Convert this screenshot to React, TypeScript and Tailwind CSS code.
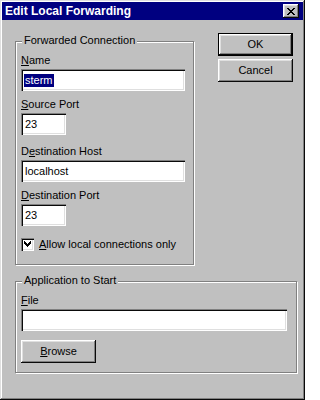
import React from 'react'

const font = { fontFamily: '"Liberation Sans", Arial, sans-serif' }

function U({ children }: { children: React.ReactNode }) {
  return <span className="underline underline-offset-[1px]">{children}</span>
}

function Label({ children }: { children: React.ReactNode }) {
  return <div className="h-[13px] text-[11px] leading-[13px] text-black">{children}</div>
}

function Field({
  width,
  value,
  selected = false,
}: {
  width: string
  value?: string
  selected?: boolean
}) {
  return (
    <div
      className={`${width} mt-[2px] flex h-[22px] items-center bg-white pl-[3px] text-[11px] leading-[13px] text-black shadow-[inset_1px_1px_#808080,inset_2px_2px_#0a0a0a,inset_-1px_-1px_#fff,inset_-2px_-2px_#dfdfdf]`}
    >
      {value &&
        (selected ? (
          <span className="bg-[#000080] px-[1px] text-white">{value}</span>
        ) : (
          <span className="pl-[1px]">{value}</span>
        ))}
    </div>
  )
}

function Button({
  children,
  isDefault = false,
  className = '',
}: {
  children: React.ReactNode
  isDefault?: boolean
  className?: string
}) {
  return (
    <button
      className={cn(
        'flex h-[23px] w-[75px] items-center justify-center bg-[#c0c0c0] text-[11px] leading-[13px] text-black',
        isDefault
          ? 'border border-black shadow-[inset_-1px_-1px_#0a0a0a,inset_1px_1px_#fff,inset_-2px_-2px_#808080,inset_2px_2px_#dfdfdf]'
          : 'shadow-[inset_-1px_-1px_#0a0a0a,inset_1px_1px_#fff,inset_-2px_-2px_#808080,inset_2px_2px_#dfdfdf]',
        className,
      )}
    >
      {children}
    </button>
  )
}

function cn(...parts: string[]) {
  return parts.filter(Boolean).join(' ')
}

function GroupBox({
  title,
  className,
  children,
}: {
  title: string
  className: string
  children: React.ReactNode
}) {
  return (
    <div
      className={cn(
        'relative border border-[#808080] shadow-[inset_1px_1px_#fff,1px_1px_#fff]',
        className,
      )}
    >
      <span className="absolute left-[6px] top-[-8px] bg-[#c0c0c0] px-[2px] text-[11px] leading-[13px] text-black">
        {title}
      </span>
      {children}
    </div>
  )
}

export default function App() {
  return (
    <div
      style={font}
      className="flex h-[400px] w-[305px] flex-col bg-[#c0c0c0] p-[2px] shadow-[inset_-1px_-1px_#0a0a0a,inset_1px_1px_#dfdfdf,inset_-2px_-2px_#808080,inset_2px_2px_#fff]"
    >
      {/* title bar */}
      <div className="flex h-[18px] items-center justify-between bg-[#000080] pl-[3px] pr-[4px]">
        <span className="text-[12px] font-bold leading-[14px] text-white">
          Edit Local Forwarding
        </span>
        <button className="flex h-[14px] w-[16px] items-center justify-center bg-[#c0c0c0] shadow-[inset_-1px_-1px_#0a0a0a,inset_1px_1px_#fff,inset_-2px_-2px_#808080,inset_2px_2px_#dfdfdf]">
          <svg width="8" height="7" viewBox="0 0 8 7" shapeRendering="crispEdges">
            <path
              d="M0 0h2v1H0zM6 0h2v1H6zM1 1h2v1H1zM5 1h2v1H5zM2 2h4v1H2zM3 3h2v1H3zM2 4h4v1H2zM1 5h2v1H1zM5 5h2v1H5zM0 6h2v1H0zM6 6h2v1H6z"
              fill="#000"
            />
          </svg>
        </button>
      </div>

      {/* body */}
      <div className="flex flex-col pl-[13px] pt-[13px]">
        <div className="flex items-start">
          <GroupBox title="Forwarded Connection" className="mt-[8px] h-[224px] w-[179px]">
            <div className="flex flex-col pl-[5px] pt-[12px]">
              <Label>
                <U>N</U>ame
              </Label>
              <Field width="w-[164px]" value="sterm" selected />

              <div className="mt-[7px]">
                <Label>
                  <U>S</U>ource Port
                </Label>
              </div>
              <Field width="w-[45px]" value="23" />

              <div className="mt-[10px]">
                <Label>
                  D<U>e</U>stination Host
                </Label>
              </div>
              <Field width="w-[164px]" value="localhost" />

              <div className="mt-[7px]">
                <Label>
                  <U>D</U>estination Port
                </Label>
              </div>
              <Field width="w-[45px]" value="23" />

              <div className="mt-[12px] flex items-center gap-[5px]">
                <div className="flex h-[13px] w-[13px] items-center justify-center bg-white shadow-[inset_1px_1px_#808080,inset_2px_2px_#0a0a0a,inset_-1px_-1px_#fff,inset_-2px_-2px_#dfdfdf]">
                  <svg width="7" height="7" viewBox="0 0 7 7" shapeRendering="crispEdges">
                    <path
                      d="M6 0h1v3H6zM5 1h1v3H5zM4 2h1v3H4zM3 3h1v3H3zM2 2h1v3H2zM1 1h1v3H1zM0 0h1v3H0z"
                      fill="#000"
                    />
                  </svg>
                </div>
                <Label>
                  <U>A</U>llow local connections only
                </Label>
              </div>
            </div>
          </GroupBox>

          <div className="ml-[24px] flex flex-col gap-[3px]">
            <Button isDefault>OK</Button>
            <Button>Cancel</Button>
          </div>
        </div>

        <GroupBox title="Application to Start" className="mt-[16px] h-[92px] w-[282px]">
          <div className="flex flex-col pl-[5px] pt-[12px]">
            <Label>
              <U>F</U>ile
            </Label>
            <Field width="w-[266px]" />
            <Button className="mt-[9px]">
              <U>B</U>rowse
            </Button>
          </div>
        </GroupBox>
      </div>
    </div>
  )
}
